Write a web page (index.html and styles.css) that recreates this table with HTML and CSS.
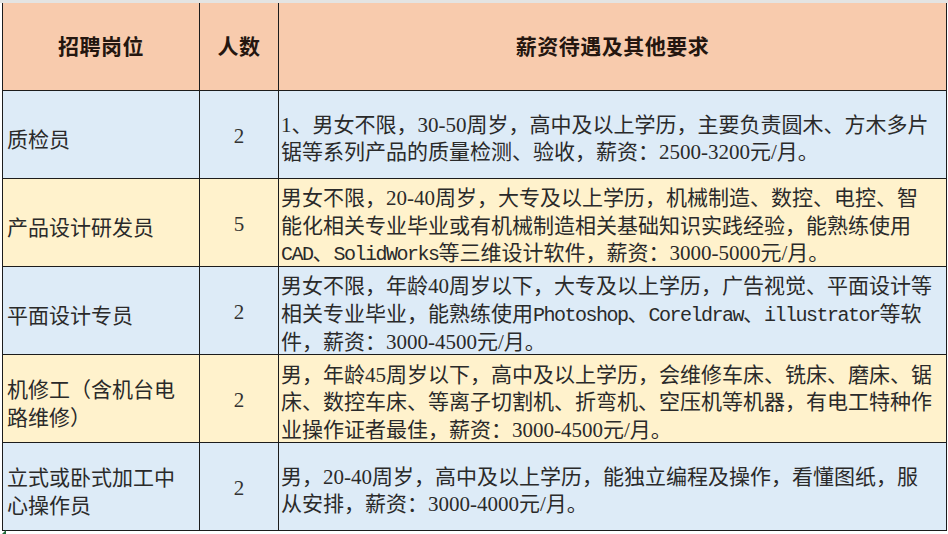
FILE: index.html
```html
<!DOCTYPE html>
<html lang="zh-CN">
<head>
<meta charset="utf-8">
<title>招聘岗位</title>
<link rel="stylesheet" href="styles.css">
</head>
<body>
<div class="page">
  <div class="table">
    <div class="cell head c1">招聘岗位</div>
    <div class="cell head c2">人数</div>
    <div class="cell head c3">薪资待遇及其他要求</div>

    <div class="cell blue c1 name"><div class="txt">质检员</div></div>
    <div class="cell blue c2 num">2</div>
    <div class="cell blue c3 desc"><div class="txt">1、男女不限，30-50周岁，高中及以上学历，主要负责圆木、方木多片<br>锯等系列产品的质量检测、验收，薪资：2500-3200元/月。</div></div>

    <div class="cell yellow c1 name"><div class="txt">产品设计研发员</div></div>
    <div class="cell yellow c2 num">5</div>
    <div class="cell yellow c3 desc"><div class="txt">男女不限，20-40周岁，大专及以上学历，机械制造、数控、电控、智<br>能化相关专业毕业或有机械制造相关基础知识实践经验，能熟练使用<br><span class="mono">CAD</span>、<span class="mono">SolidWorks</span>等三维设计软件，薪资：3000-5000元/月。</div></div>

    <div class="cell blue c1 name"><div class="txt">平面设计专员</div></div>
    <div class="cell blue c2 num">2</div>
    <div class="cell blue c3 desc"><div class="txt">男女不限，年龄40周岁以下，大专及以上学历，广告视觉、平面设计等<br>相关专业毕业，能熟练使用<span class="mono">Photoshop</span>、<span class="mono">Coreldraw</span>、<span class="mono">illustrator</span>等软<br>件，薪资：3000-4500元/月。</div></div>

    <div class="cell yellow c1 name"><div class="txt">机修工（含机台电<br>路维修）</div></div>
    <div class="cell yellow c2 num">2</div>
    <div class="cell yellow c3 desc"><div class="txt">男，年龄45周岁以下，高中及以上学历，会维修车床、铣床、磨床、锯<br>床、数控车床、等离子切割机、折弯机、空压机等机器，有电工特种作<br>业操作证者最佳，薪资：3000-4500元/月。</div></div>

    <div class="cell blue c1 name"><div class="txt">立式或卧式加工中<br>心操作员</div></div>
    <div class="cell blue c2 num">2</div>
    <div class="cell blue c3 desc"><div class="txt">男，20-40周岁，高中及以上学历，能独立编程及操作，看懂图纸，服<br>从安排，薪资：3000-4000元/月。</div></div>
  </div>
  <span class="corner"></span>
</div>
</body>
</html>
```

FILE: styles.css
```css
* { box-sizing: border-box; }

html, body {
  margin: 0;
  padding: 0;
  background: #ffffff;
}

body {
  width: 948px;
  height: 534px;
  overflow: hidden;
  font-family: "Liberation Serif", "Noto Sans CJK SC", sans-serif;
  color: #2a2a2a;
}

.page {
  position: relative;
  padding: 0 0 0 2px;
  border-top: 3px solid #e4e4e2;
}

.table {
  display: grid;
  grid-template-columns: 197px 79px 668px;
  grid-template-rows: 88px 88px 88px 88px 88px 88px;
  border-left: 1px solid #1c1c1c;
  width: 945px;
}

.cell {
  display: flex;
  align-items: center;
  border-right: 1px solid #1c1c1c;
  border-bottom: 1px solid #1c1c1c;
  font-size: 21px;
  line-height: 27.5px;
  white-space: nowrap;
  overflow: hidden;
}

.head {
  background: #f8cbad;
  justify-content: center;
  font-family: "Noto Sans CJK SC", sans-serif;
  font-weight: 700;
  color: #24160f;
  letter-spacing: 0.5px;
  padding-bottom: 2px;
}

.blue { background: #ddebf7; }
.yellow { background: #fff2cc; }

.name {
  padding: 6px 0 0 4px;
  font-family: "Noto Sans CJK SC", sans-serif;
}

.name .txt { line-height: 28px; }

.num {
  justify-content: center;
  padding-top: 4px;
  color: #333333;
}

.desc {
  padding: 9px 0 0 2px;
}

.mono {
  font-family: "Liberation Mono", monospace;
  font-size: 20px;
  letter-spacing: -1.5px;
}

.corner {
  position: absolute;
  left: 1px;
  top: 527px;
  width: 5px;
  height: 5px;
  background: #1e6b3a;
  clip-path: polygon(0 100%, 100% 0, 100% 100%);
}
```
